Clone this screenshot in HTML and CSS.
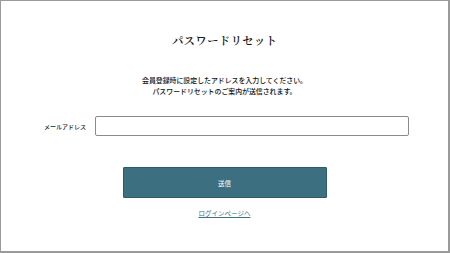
FILE: index.html
```html
<!DOCTYPE html>
<html lang="ja">
<head>
<meta charset="utf-8">
<title>パスワードリセット</title>
<link rel="stylesheet" href="styles.css">
</head>
<body>
<div class="frame">
  <h1 class="title">パスワードリセット</h1>
  <p class="desc">会員登録時に設定したアドレスを入力してください。<br>パスワードリセットのご案内が送信されます。</p>
  <form class="form">
    <div class="row">
      <label class="label" for="email">メールアドレス</label>
      <input class="input" id="email" type="email">
    </div>
    <button class="btn" type="button">送信</button>
    <a class="link" href="#">ログインページへ</a>
  </form>
</div>
</body>
</html>
```
FILE: styles.css
```css
html, body {
  margin: 0;
  padding: 0;
  background: #fff;
}
body {
  font-family: "Noto Sans CJK JP", "Noto Sans", sans-serif;
  color: #222;
}
.frame {
  width: 450px;
  height: 253px;
  box-sizing: border-box;
  border: 1px solid #9a9a9a;
  border-right-width: 2px;
  border-bottom-width: 2px;
  display: flex;
  flex-direction: column;
  align-items: center;
}
.title {
  margin: 31px 0 0;
  font-family: "Noto Serif CJK JP", "Noto Sans CJK JP", serif;
  font-weight: 600;
  font-size: 11.5px;
  line-height: 16px;
  letter-spacing: 0.2px;
  color: #111;
}
.desc {
  margin: 27px 0 0;
  font-size: 6.9px;
  font-weight: 500;
  line-height: 11px;
  text-align: center;
  color: #111;
}
.form {
  width: 100%;
  display: flex;
  flex-direction: column;
  align-items: center;
}
.row {
  margin-top: 19px;
  align-self: stretch;
  display: flex;
  align-items: center;
  padding-left: 43px;
}
.label {
  width: 51px;
  font-size: 6px;
  font-weight: 500;
  color: #222;
}
.input {
  width: 314px;
  height: 20px;
  box-sizing: border-box;
  margin: 0;
  padding: 0 4px;
  border: 1px solid #8a8a8a;
  border-radius: 2px;
  background: #fff;
}
.btn {
  margin-top: 31px;
  width: 204px;
  height: 31px;
  box-sizing: border-box;
  border: 1px solid #2c5b69;
  border-radius: 1px;
  background: #3c6f7f;
  color: #fff;
  font-family: "Noto Sans CJK JP", sans-serif;
  font-size: 6.5px;
  padding: 0;
}
.link {
  margin-top: 10px;
  font-size: 6.5px;
  line-height: 10px;
  color: #3f6f80;
  text-decoration: underline;
}
```
